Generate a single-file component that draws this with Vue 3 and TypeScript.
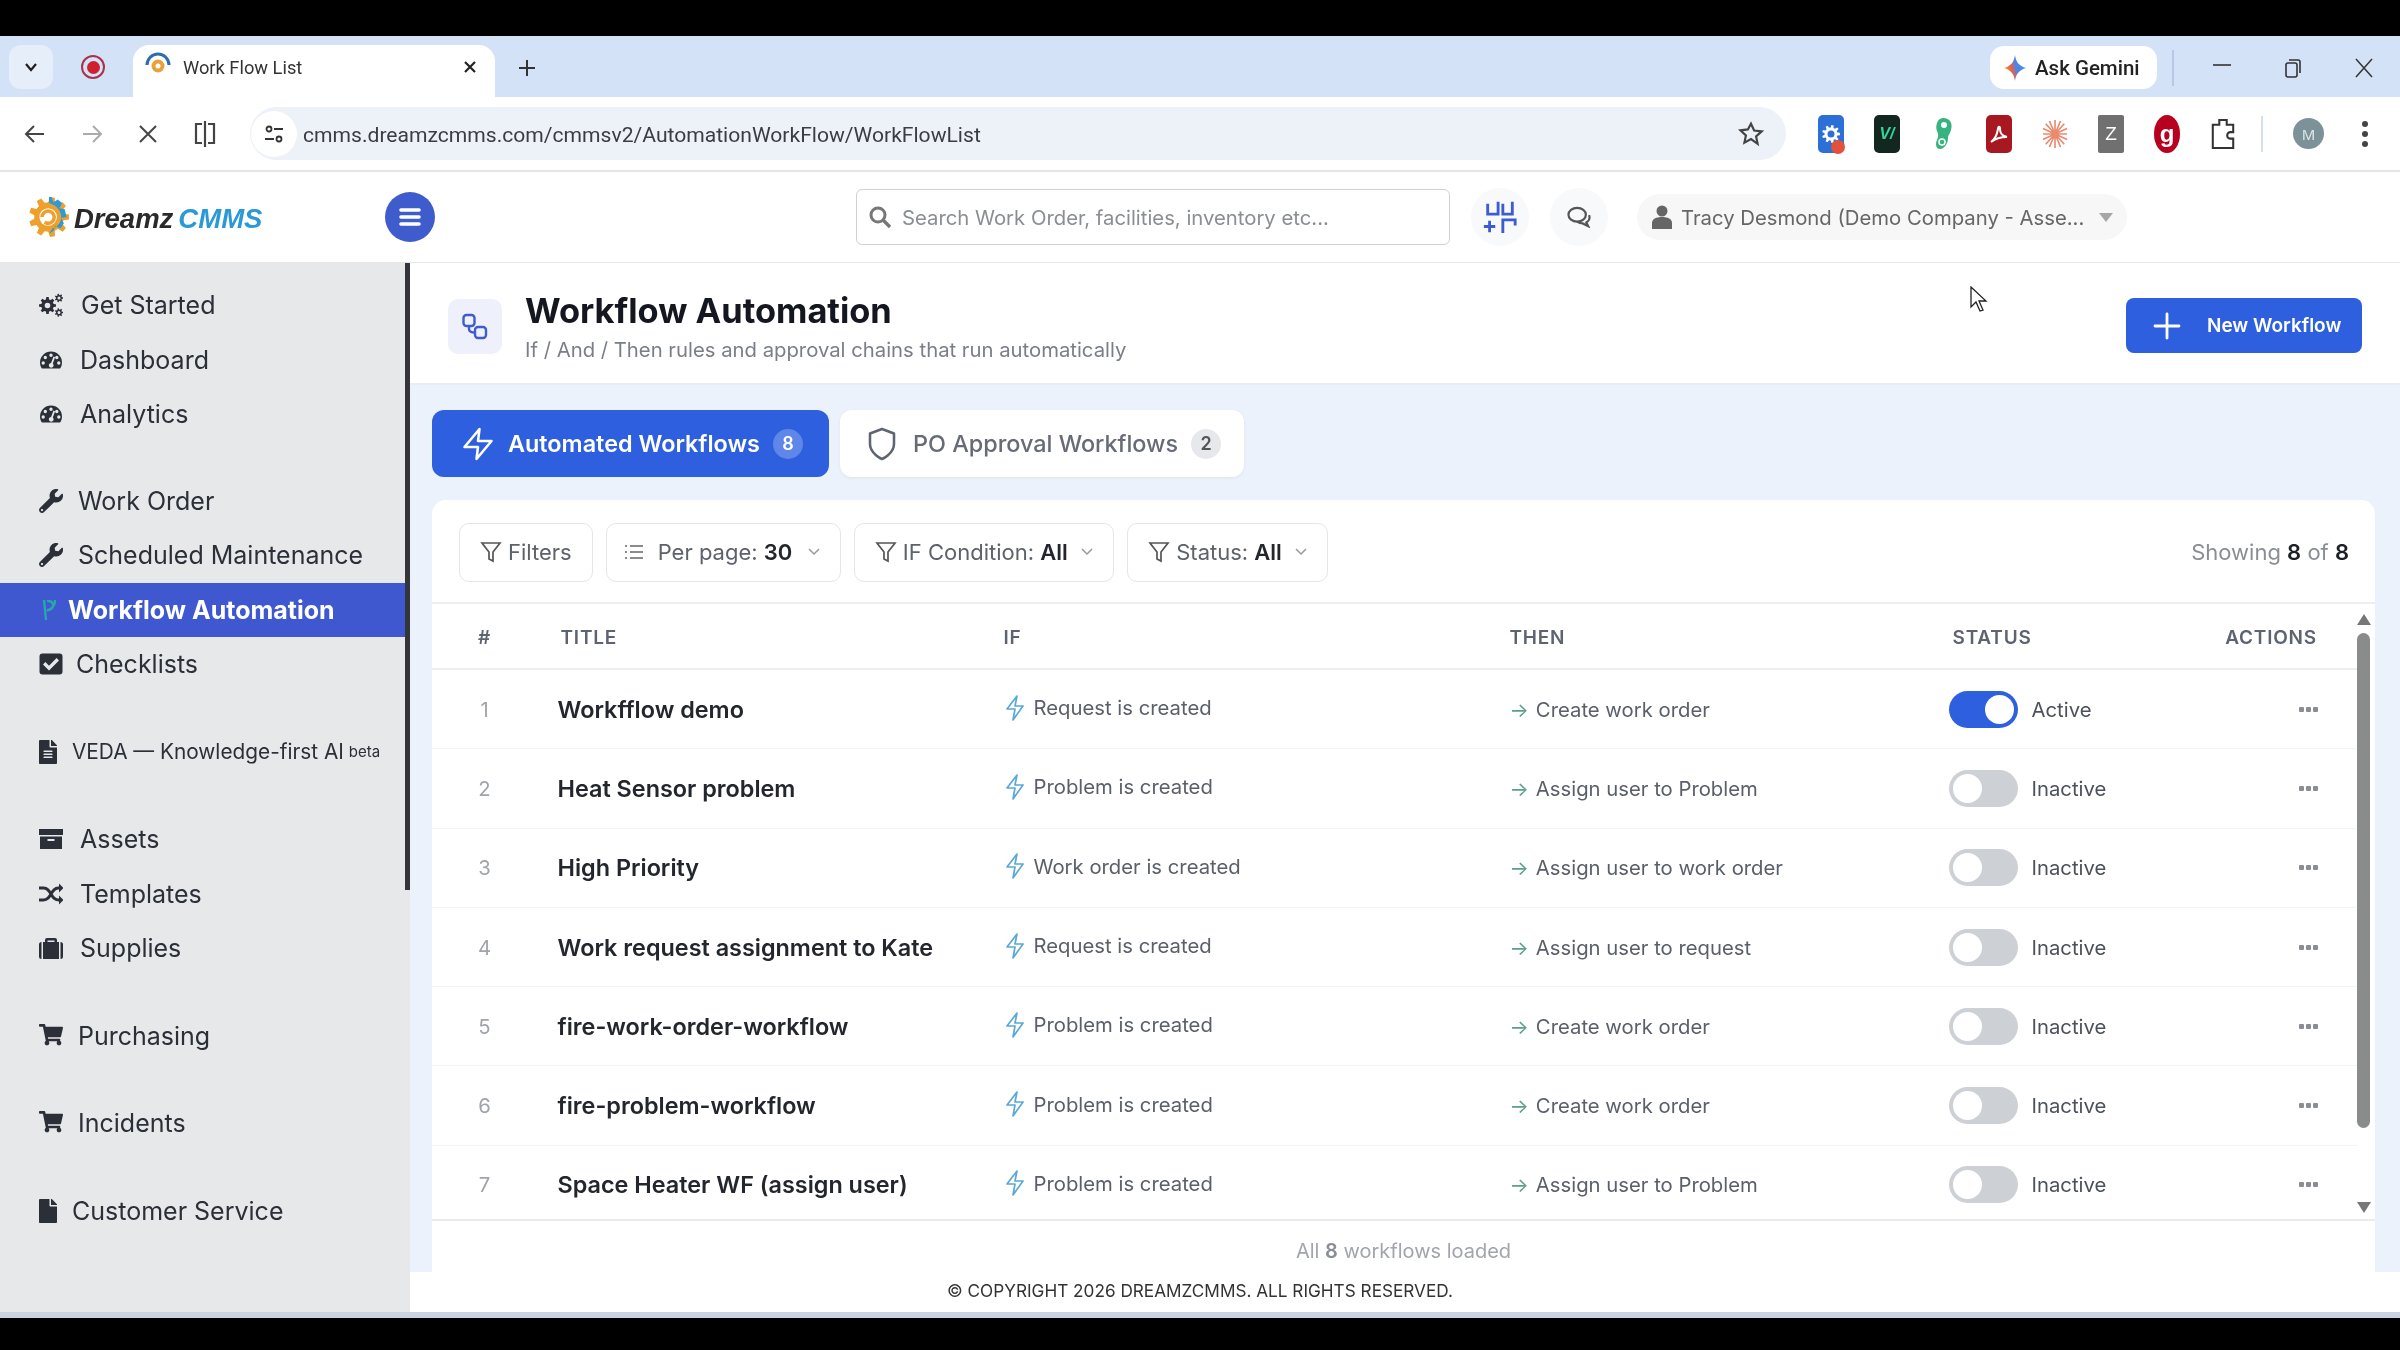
<script setup lang="ts">
interface SideItem {
  label: string;
  icon: string;
  inset: number;
  active?: boolean;
  note?: string;
  small?: boolean;
}
interface Flow {
  title: string;
  cond: string;
  action: string;
  on: boolean;
}

function gearPath(cx: number, cy: number, outer: number, inner: number, teeth: number): string {
  const pts: string[] = [];
  const step = (Math.PI * 2) / teeth;
  for (let i = 0; i < teeth; i++) {
    const a = i * step;
    const corners: [number, number][] = [
      [inner, a - step * 0.32],
      [outer, a - step * 0.18],
      [outer, a + step * 0.18],
      [inner, a + step * 0.32],
    ];
    for (const [r, t] of corners) {
      pts.push(`${(cx + r * Math.cos(t)).toFixed(2)} ${(cy + r * Math.sin(t)).toFixed(2)}`);
    }
  }
  return `M${pts.join("L")}Z`;
}

function hole(cx: number, cy: number, r: number): string {
  return `M${cx - r} ${cy}a${r} ${r} 0 1 0 ${r * 2} 0a${r} ${r} 0 1 0 ${-r * 2} 0Z`;
}

const wrench =
  "M507.73 109.1c-2.24-9.03-13.54-12.09-20.12-5.51l-74.36 74.36-67.88-11.31-11.31-67.88 74.36-74.36c6.62-6.62 3.43-17.9-5.66-20.16-47.38-11.74-99.55.91-136.58 37.93-39.64 39.64-50.55 97.1-34.05 147.2L18.74 402.76c-24.99 24.99-24.99 65.51 0 90.5 24.99 24.99 65.51 24.99 90.5 0l213.21-213.21c50.12 16.71 107.47 5.68 147.37-34.22 37.07-37.07 49.7-89.32 37.91-136.73zM64 472c-13.25 0-24-10.75-24-24 0-13.26 10.75-24 24-24s24 10.74 24 24c0 13.25-10.75 24-24 24z";
const cart =
  "M528.12 301.319l47.273-208C578.806 78.301 567.391 64 551.99 64H159.208l-9.166-44.81C147.758 8.021 137.93 0 126.529 0H24C10.745 0 0 10.745 0 24v16c0 13.255 10.745 24 24 24h69.883l70.248 343.435C147.325 417.1 136 435.222 136 456c0 30.928 25.072 56 56 56s56-25.072 56-56c0-15.674-6.447-29.835-16.824-40h209.647C430.447 426.165 424 440.326 424 456c0 30.928 25.072 56 56 56s56-25.072 56-56c0-22.172-12.888-41.332-31.579-50.405l5.517-24.276c3.413-15.018-8.002-29.319-23.403-29.319H218.117l-6.545-32h293.145c11.206 0 20.92-7.754 23.403-18.681z";
const fileAlt =
  "M224 136V0H24C10.7 0 0 10.7 0 24v464c0 13.3 10.7 24 24 24h336c13.3 0 24-10.7 24-24V160H248c-13.2 0-24-10.8-24-24zm64 236c0 6.6-5.4 12-12 12H108c-6.6 0-12-5.4-12-12v-8c0-6.6 5.4-12 12-12h168c6.6 0 12 5.4 12 12v8zm0-64c0 6.6-5.4 12-12 12H108c-6.6 0-12-5.4-12-12v-8c0-6.6 5.4-12 12-12h168c6.6 0 12 5.4 12 12v8zm0-72v8c0 6.6-5.4 12-12 12H108c-6.6 0-12-5.4-12-12v-8c0-6.6 5.4-12 12-12h168c6.6 0 12 5.4 12 12zm96-114.1v6.1H256V0h6.1c6.4 0 12.5 2.5 17 7l97.9 98c4.5 4.5 7 10.6 7 16.9z";
const file =
  "M224 136V0H24C10.7 0 0 10.7 0 24v464c0 13.3 10.7 24 24 24h336c13.3 0 24-10.7 24-24V160H248c-13.2 0-24-10.8-24-24zm160-14.1v6.1H256V0h6.1c6.4 0 12.5 2.5 17 7l97.9 98c4.5 4.5 7 10.6 7 16.9z";

const gauge =
  '<path fill-rule="evenodd" d="M12 3.5A11 11 0 0 0 1 14.5c0 2.3.7 4.400 1.900 6h18.200c1.200-1.600 1.900-3.700 1.900-6a11 11 0 0 0-11-11z' +
  hole(12, 7.2, 1.7) + hole(6.300, 9.500, 1.700) + hole(4.200, 15, 1.700) + hole(19.800, 15, 1.700) + hole(17.800, 9.500, 1.700) +
  'M14.500 8.500l1.600.7-2.300 6.300a2.400 2.400 0 1 1-1.700-.6z"/>';

const sideIcons: Record<string, string> = {
  cogs:
    `<path fill-rule="evenodd" d="${gearPath(8.5, 12.5, 8.5, 6.3, 8)}${hole(8.5, 12.5, 2.8)}"/>` +
    `<path fill-rule="evenodd" d="${gearPath(20, 5, 4.2, 3, 7)}${hole(20, 5, 1.5)}"/>` +
    `<path fill-rule="evenodd" d="${gearPath(20, 19.500, 4.2, 3, 7)}${hole(20, 19.500, 1.5)}"/>`,
  gauge,
  wrench: `<path transform="scale(.04688)" d="${wrench}"/>`,
  flow: '<path d="M5 2l2 20M8 3c8-1 8 9 0 9.500M16 2c.5 5-3 9-8 10.500" fill="none" stroke="#28a7ad" stroke-width="2.400"/>',
  check:
    '<path fill-rule="evenodd" d="M3.500 1.500h17a3 3 0 0 1 3 3v15a3 3 0 0 1-3 3h-17a3 3 0 0 1-3-3v-15a3 3 0 0 1 3-3zM10 18.500l10-10-2.400-2.400L10 13.700l-3.600-3.600L4 12.500z"/>',
  fileAlt: `<path transform="scale(.04688)" d="${fileAlt}"/>`,
  file: `<path transform="scale(.04688)" d="${file}"/>`,
  archive:
    '<path fill-rule="evenodd" d="M0 2h24v6H0zM1 9.500h22V22H1zM8.500 12v2h7v-2z"/>',
  random:
    '<path d="M0 6h4.500c4 0 5.500 2.500 7.500 6s3.500 6 7.500 6H21M0 18h4.500c4 0 5.500-2.500 7.500-6s3.500-6 7.500-6H21" fill="none" stroke="currentColor" stroke-width="2.800"/><path d="M20 1.500l4.500 4.500L20 10.500zM20 13.500l4.500 4.500-4.500 4.500z"/>',
  briefcase:
    '<path fill-rule="evenodd" d="M8 2h8a2 2 0 0 1 2 2v2h2v17H4V6h2V4a2 2 0 0 1 2-2zM8.500 4.500V6h7V4.500zM0 8.500A2.500 2.500 0 0 1 2.500 6v17A2.500 2.500 0 0 1 0 20.500zM21.500 6A2.500 2.500 0 0 1 24 8.500v12a2.500 2.500 0 0 1-2.500 2.500z"/>',
  cart: `<path transform="scale(.04167)" d="${cart}"/>`,
};

const groups: SideItem[][] = [
  [
    { label: "Get Started", icon: "cogs", inset: 42 },
    { label: "Dashboard", icon: "gauge", inset: 41 },
    { label: "Analytics", icon: "gauge", inset: 41 },
  ],
  [
    { label: "Work Order", icon: "wrench", inset: 39 },
    { label: "Scheduled Maintenance", icon: "wrench", inset: 39 },
    { label: "Workflow Automation", icon: "flow", inset: 29, active: true },
    { label: "Checklists", icon: "check", inset: 37 },
  ],
  [{ label: "VEDA — Knowledge-first AI", icon: "fileAlt", inset: 33, note: "beta", small: true }],
  [
    { label: "Assets", icon: "archive", inset: 41 },
    { label: "Templates", icon: "random", inset: 41 },
    { label: "Supplies", icon: "briefcase", inset: 41 },
  ],
  [{ label: "Purchasing", icon: "cart", inset: 39 }],
  [{ label: "Incidents", icon: "cart", inset: 39 }],
  [{ label: "Customer Service", icon: "file", inset: 33 }],
];

const flows: Flow[] = [
  { title: "Workfflow demo", cond: "Request is created", action: "Create work order", on: true },
  { title: "Heat Sensor problem", cond: "Problem is created", action: "Assign user to Problem", on: false },
  { title: "High Priority", cond: "Work order is created", action: "Assign user to work order", on: false },
  { title: "Work request assignment to Kate", cond: "Request is created", action: "Assign user to request", on: false },
  { title: "fire-work-order-workflow", cond: "Problem is created", action: "Create work order", on: false },
  { title: "fire-problem-workflow", cond: "Problem is created", action: "Create work order", on: false },
  { title: "Space Heater WF (assign user)", cond: "Problem is created", action: "Assign user to Problem", on: false },
];

const logoGear = gearPath(24, 24, 23, 17, 9);
const extGear = gearPath(11, 13, 9, 6.5, 9);
</script>

<template>
  <div class="screen">
    <div class="black top"></div>

    <div class="tabstrip">
      <div class="tab-menu">
        <svg width="16" height="16" viewBox="0 0 16 16"><path d="M3 5l5 6 5-6" fill="none" stroke="#1f1f1f" stroke-width="2.200" /></svg>
      </div>
      <div class="rec"><span></span></div>
      <div class="tab">
        <svg class="favicon" width="26" height="26" viewBox="0 0 26 26">
          <path d="M2 14a11 11 0 0 1 22 0" fill="none" stroke="#2f6db3" stroke-width="3" />
          <circle cx="13" cy="15" r="6.500" fill="#e9a23b" />
          <circle cx="13" cy="15" r="2.500" fill="#fff" />
        </svg>
        <span class="tab-title">Work Flow List</span>
        <svg class="tab-x" width="16" height="16" viewBox="0 0 16 16"><path d="M3 3l10 10M13 3L3 13" stroke="#222" stroke-width="2.200" /></svg>
      </div>
      <svg class="tab-plus" width="20" height="20" viewBox="0 0 20 20"><path d="M10 2v16M2 10h16" stroke="#333" stroke-width="2" /></svg>
      <div class="strip-right">
        <div class="gemini">
          <svg width="24" height="28" viewBox="0 0 24 28">
            <defs>
              <linearGradient id="gem" x1="0" y1="0.7" x2="1" y2="0.4">
                <stop offset="0" stop-color="#e8b12c" />
                <stop offset="0.35" stop-color="#e8604a" />
                <stop offset="0.6" stop-color="#4a86e8" />
                <stop offset="1" stop-color="#3f8cf0" />
              </linearGradient>
            </defs>
            <path d="M12 1c1 7 4 11 11 13-7 2-10 6-11 13-1-7-4-11-11-13C8 12 11 8 12 1z" fill="url(#gem)" />
          </svg>
          <span>Ask Gemini</span>
        </div>
        <i class="strip-div"></i>
        <div class="win-btns">
          <svg width="20" height="20" viewBox="0 0 20 20"><path d="M1 7h18" stroke="#333" stroke-width="1.600" /></svg>
          <svg width="20" height="20" viewBox="0 0 20 20"><rect x="3" y="5" width="11" height="14" rx="2" fill="none" stroke="#333" stroke-width="1.600" /><path d="M6 2h9a2 2 0 0 1 2 2v11" fill="none" stroke="#333" stroke-width="1.600" /></svg>
          <svg width="20" height="20" viewBox="0 0 20 20"><path d="M2 1l16 18M18 1L2 19" stroke="#333" stroke-width="1.500" /></svg>
        </div>
      </div>
    </div>

    <div class="toolbar">
      <div class="nav-btns">
        <svg width="22" height="22" viewBox="0 0 22 22"><path d="M20 11H3M10 3l-8 8 8 8" fill="none" stroke="#444" stroke-width="2" /></svg>
        <svg width="22" height="22" viewBox="0 0 22 22"><path d="M2 11h17M12 3l8 8-8 8" fill="none" stroke="#aaa" stroke-width="2" /></svg>
        <svg width="20" height="20" viewBox="0 0 20 20"><path d="M2 2l16 16M18 2L2 18" stroke="#444" stroke-width="2" /></svg>
        <svg width="24" height="26" viewBox="0 0 24 26"><path d="M9 3H3v19h6M15 3h6v19h-6M12 0v26" fill="none" stroke="#444" stroke-width="2.200" /></svg>
      </div>
      <div class="omnibox">
        <div class="tune">
          <svg width="20" height="20" viewBox="0 0 20 20"><circle cx="5" cy="5" r="2.500" fill="none" stroke="#333" stroke-width="1.800" /><path d="M10 5h9M1 15h9" stroke="#333" stroke-width="2" /><circle cx="15" cy="15" r="2.500" fill="none" stroke="#333" stroke-width="1.800" /></svg>
        </div>
        <span class="url">cmms.dreamzcmms.com/cmmsv2/AutomationWorkFlow/WorkFlowList</span>
        <svg class="star" width="26" height="26" viewBox="0 0 24 24"><path d="M12 2.500l2.900 6.300 6.900.8-5.100 4.700 1.400 6.800L12 16.700l-6.100 3.400 1.400-6.800-5.100-4.700 6.900-.8z" fill="none" stroke="#444" stroke-width="2" /></svg>
      </div>
      <div class="exts">
        <span class="ext e1">
          <svg width="22" height="26" viewBox="0 0 22 26"><path :d="extGear" fill="#fff" /><circle cx="11" cy="13" r="3.500" fill="#2c6fd6" /></svg>
          <i></i>
        </span>
        <span class="ext e2">V/</span>
        <svg class="ext-svg" width="26" height="36" viewBox="0 0 26 36"><path d="M13 2c7 0 10 5 8 12-1 4-3 5-3 8 0 6-4 11-8 11s-5-5-3-9c1-3 2-5 0-9S7 2 13 2z" fill="#36b37e" /><circle cx="14" cy="9" r="3" fill="#fff" /><circle cx="12" cy="26" r="3" fill="none" stroke="#fff" stroke-width="1.500" /></svg>
        <span class="ext e4">
          <svg width="22" height="22" viewBox="0 0 22 22"><path d="M3 19c3-2 6-7 7-13 .3-3 2-3 2 0 0 4 2 7 7 8-5 0-11 1-16 5z" fill="none" stroke="#fff" stroke-width="2" /></svg>
        </span>
        <svg class="ext-svg" width="28" height="32" viewBox="0 0 28 32"><path d="M14 1v30M1 16h26M4 5l20 22M24 5L4 27M8 2l12 28M20 2L8 30M1 10l26 12M27 10L1 22" stroke="#e98a6f" stroke-width="1.800" /></svg>
        <span class="ext e6">Z</span>
        <span class="ext e7">g</span>
        <svg class="ext-svg" width="28" height="36" viewBox="0 0 28 36"><path d="M3 8h7V3h8v5h7v8h-3a3 3 0 0 0 0 7h3v10H3z" fill="none" stroke="#333" stroke-width="2.200" /></svg>
        <i class="bar-div"></i>
        <span class="avatar">M</span>
        <svg width="8" height="30" viewBox="0 0 8 30"><circle cx="4" cy="5" r="3" fill="#444" /><circle cx="4" cy="15" r="3" fill="#444" /><circle cx="4" cy="25" r="3" fill="#444" /></svg>
      </div>
    </div>

    <header class="appbar">
      <div class="logo">
        <svg width="42" height="46" viewBox="0 0 48 48">
          <path :d="logoGear" fill="#eea02c" />
          <path d="M24 1h3l2 6 5-3 5 4-3 6 6 1 2 9-6 1 3 6-4 6-6-3-2 6-5 3 4-6c6-2 10-7 10-13S34 11 24 8z" fill="#2d9ad8" />
          <circle cx="23" cy="24" r="10" fill="#fff" />
          <path d="M16 24a7 7 0 1 1 3 6" fill="none" stroke="#eea02c" stroke-width="4" />
        </svg>
        <span class="logo-dark">Dreamz</span>
        <span class="logo-blue">CMMS</span>
      </div>
      <button class="menu-btn">
        <svg width="24" height="20" viewBox="0 0 24 20"><path d="M3 3h18M3 10h18M3 17h18" stroke="#fff" stroke-width="3.600" stroke-linecap="round" /></svg>
      </button>
      <div class="search">
        <svg width="24" height="24" viewBox="0 0 24 24"><circle cx="10" cy="10" r="7" fill="none" stroke="#777" stroke-width="3" /><path d="M15 15l7 7" stroke="#777" stroke-width="3.400" /></svg>
        <span>Search Work Order, facilities, inventory etc...</span>
      </div>
      <div class="round-btn scan">
        <svg width="36" height="36" viewBox="0 0 38 38">
          <path d="M6 5v11h11V3M32 3v13H22V5" fill="none" stroke="#3f5ccd" stroke-width="3" />
          <path d="M2 29h12M8 23v12M22 36V22h13v6" fill="none" stroke="#3f5ccd" stroke-width="3" />
        </svg>
      </div>
      <div class="round-btn chat">
        <svg width="24" height="22" viewBox="0 0 26 24">
          <ellipse cx="11" cy="9.500" rx="9.500" ry="7.500" fill="none" stroke="#555" stroke-width="2.400" />
          <path d="M24 10c1.500 4-1 7-3 8l2 4-6-3c-2 0-4-.5-6-2" fill="none" stroke="#555" stroke-width="2.400" />
        </svg>
      </div>
      <div class="user">
        <svg width="20" height="24" viewBox="0 0 20 24"><circle cx="10" cy="6" r="5.500" fill="#666" /><path d="M0 24v-6c0-4 4-6 10-6s10 2 10 6v6z" fill="#666" /></svg>
        <span>Tracy Desmond (Demo Company - Asse...</span>
        <svg class="user-caret" width="14" height="9" viewBox="0 0 14 9"><path d="M0 0h14L7 9z" fill="#a6a6a6" /></svg>
      </div>
    </header>

    <div class="body">
      <aside class="sidebar">
        <nav class="side-nav">
          <ul v-for="(group, g) in groups" :key="g" class="side-group">
            <li v-for="item in group" :key="item.label" class="side-item" :class="{ active: item.active, small: item.small }">
              <span class="side-icon" :style="{ width: item.inset + 'px' }">
                <svg width="24" height="24" viewBox="0 0 24 24" fill="currentColor" v-html="sideIcons[item.icon]"></svg>
              </span>
              <span>{{ item.label }}</span>
              <small v-if="item.note">{{ item.note }}</small>
            </li>
          </ul>
        </nav>
        <div class="side-rail"><i></i></div>
      </aside>

      <main class="main">
        <section class="page-head">
          <div class="head-icon">
            <svg width="28" height="28" viewBox="0 0 28 28">
              <rect x="2.500" y="3" width="11" height="11" rx="3" fill="none" stroke="#3f5ccd" stroke-width="2.400" />
              <rect x="14" y="15" width="11" height="11" rx="3" fill="none" stroke="#3f5ccd" stroke-width="2.400" />
              <path d="M8 14v3c0 2 1.500 3.500 6 3.500" fill="none" stroke="#3f5ccd" stroke-width="2.400" />
            </svg>
          </div>
          <div class="head-text">
            <h1>Workflow Automation</h1>
            <p>If / And / Then rules and approval chains that run automatically</p>
          </div>
          <button class="new-btn">
            <svg width="28" height="28" viewBox="0 0 28 28"><path d="M14 2v24M2 14h24" stroke="#fff" stroke-width="2.800" stroke-linecap="round" /></svg>
            <span>New Workflow</span>
          </button>
          <svg class="cursor" width="18" height="26" viewBox="0 0 18 26"><path d="M1 1v20l5-5 4 9 3-1-4-9h7z" fill="#fff" stroke="#222" stroke-width="1.300" /></svg>
        </section>

        <section class="content">
          <div class="wf-tabs">
            <button class="wf-tab on">
              <svg width="36" height="36" viewBox="0 0 24 24"><path d="M13 2 3 14h9l-1 8 10-12h-9z" fill="none" stroke="#fff" stroke-width="1.700" stroke-linejoin="round" /></svg>
              <span>Automated Workflows</span>
              <b class="count">8</b>
            </button>
            <button class="wf-tab off">
              <svg width="36" height="36" viewBox="0 0 24 24"><path d="M12 22s8-3.500 8-10V5l-8-3-8 3v7c0 6.500 8 10 8 10z" fill="none" stroke="#5f6570" stroke-width="1.700" stroke-linejoin="round" /></svg>
              <span>PO Approval Workflows</span>
              <b class="count">2</b>
            </button>
          </div>

          <div class="card">
            <div class="filters">
              <button class="chip">
                <svg class="funnel" width="22" height="24" viewBox="0 0 22 24"><path d="M2 3h18l-7 9v9l-4-2v-7z" fill="none" stroke="#555" stroke-width="1.700" /></svg>
                <span>Filters</span>
              </button>
              <button class="chip pp">
                <svg width="18" height="16" viewBox="0 0 18 16"><path d="M5 2h13M5 8h13M5 14h13M0 2h2M0 8h2M0 14h2" stroke="#666" stroke-width="1.500" /></svg>
                <span>Per page: <b>30</b></span>
                <svg class="chev" width="12" height="8" viewBox="0 0 12 8"><path d="M1 1l5 5 5-5" fill="none" stroke="#999" stroke-width="1.500" /></svg>
              </button>
              <button class="chip">
                <svg class="funnel" width="22" height="24" viewBox="0 0 22 24"><path d="M2 3h18l-7 9v9l-4-2v-7z" fill="none" stroke="#555" stroke-width="1.700" /></svg>
                <span>IF Condition: <b>All</b></span>
                <svg class="chev" width="12" height="8" viewBox="0 0 12 8"><path d="M1 1l5 5 5-5" fill="none" stroke="#999" stroke-width="1.500" /></svg>
              </button>
              <button class="chip">
                <svg class="funnel" width="22" height="24" viewBox="0 0 22 24"><path d="M2 3h18l-7 9v9l-4-2v-7z" fill="none" stroke="#555" stroke-width="1.700" /></svg>
                <span>Status: <b>All</b></span>
                <svg class="chev" width="12" height="8" viewBox="0 0 12 8"><path d="M1 1l5 5 5-5" fill="none" stroke="#999" stroke-width="1.500" /></svg>
              </button>
              <div class="showing">Showing <b>8</b> of <b>8</b></div>
            </div>

            <div class="table-wrap">
              <div class="table">
                <div class="row head">
                  <span class="c-num">#</span>
                  <span class="c-title">TITLE</span>
                  <span>IF</span>
                  <span>THEN</span>
                  <span>STATUS</span>
                  <span class="c-act">ACTIONS</span>
                </div>
                <div v-for="(f, i) in flows" :key="f.title" class="row">
                  <span class="c-num">{{ i + 1 }}</span>
                  <span class="flow-name">{{ f.title }}</span>
                  <span class="cond">
                    <svg width="22" height="26" viewBox="0 0 22 26"><path d="M13 1 3 14h8l-2 11 10-14h-8z" fill="none" stroke="#5aa8d8" stroke-width="1.700" stroke-linejoin="round" /></svg>
                    {{ f.cond }}
                  </span>
                  <span class="then"><em>→</em>{{ f.action }}</span>
                  <span class="status">
                    <i class="toggle" :class="{ on: f.on }"></i>
                    {{ f.on ? "Active" : "Inactive" }}
                  </span>
                  <span class="c-act dots"><i></i><i></i><i></i></span>
                </div>
              </div>
              <div class="scrollbar">
                <i class="up"></i>
                <div class="track"><i></i></div>
                <i class="down"></i>
              </div>
            </div>

            <div class="loaded">All <b>8</b> workflows loaded</div>
          </div>
        </section>

        <footer class="copyright">© COPYRIGHT 2026 DREAMZCMMS. ALL RIGHTS RESERVED.</footer>
      </main>
    </div>

    <div class="edge"></div>
    <div class="black bottom"></div>
  </div>
</template>

<style>
html,
body {
  margin: 0;
  background: #000;
}
</style>

<style scoped>
.screen {
  width: 2400px;
  height: 1350px;
  display: flex;
  flex-direction: column;
  overflow: hidden;
  font-family: Inter, "Noto Sans", sans-serif;
  color: #2b2f38;
  background: #fff;
  filter: blur(0.4px);
}
button {
  font-family: inherit;
  border: none;
  cursor: pointer;
}
.black {
  background: #000;
  flex: none;
}
.top {
  height: 36px;
}
.bottom {
  height: 32px;
}
.edge {
  height: 6px;
  flex: none;
  background: #c9d3e2;
}

/* browser chrome */
.tabstrip {
  height: 61px;
  flex: none;
  background: #d3e2f6;
  display: flex;
  align-items: flex-end;
  padding-left: 9px;
}
.tab-menu {
  width: 44px;
  height: 44px;
  margin-bottom: 8px;
  border-radius: 12px;
  background: #e6eefa;
  display: flex;
  align-items: center;
  justify-content: center;
}
.rec {
  width: 24px;
  height: 24px;
  margin: 0 28px 18px 28px;
  border-radius: 50%;
  border: 2.500px solid #a8324a;
  box-sizing: border-box;
  display: flex;
  align-items: center;
  justify-content: center;
}
.rec span {
  width: 13px;
  height: 13px;
  border-radius: 50%;
  background: #cf2030;
}
.tab {
  width: 362px;
  height: 52px;
  box-sizing: border-box;
  padding: 0 17px 8px 12px;
  background: #fff;
  border-radius: 16px 16px 0 0;
  display: flex;
  align-items: center;
}
.favicon {
  margin-right: 12px;
  margin-top: -6px;
}
.tab-title {
  font: 18.300px Roboto, sans-serif;
  color: #333;
}
.tab-x {
  margin-left: auto;
}
.tab-plus {
  margin: 0 0 19px 22px;
}
.strip-right {
  margin-left: auto;
  display: flex;
  align-items: center;
  align-self: center;
  margin-top: 2px;
}
.gemini {
  width: 167px;
  height: 43px;
  box-sizing: border-box;
  padding-left: 13px;
  gap: 8px;
  border-radius: 14px;
  background: #fff;
  display: flex;
  align-items: center;
  font: 500 20.500px Roboto, sans-serif;
  color: #222;
}
.strip-div {
  width: 2px;
  height: 36px;
  margin-left: 15px;
  background: #b6c8e4;
}
.win-btns {
  display: flex;
  align-items: center;
  gap: 51px;
  margin-left: 38px;
  margin-right: 26px;
}
.toolbar {
  height: 75px;
  flex: none;
  box-sizing: border-box;
  background: #fff;
  border-bottom: 2px solid #e3e6eb;
  display: flex;
  align-items: center;
  padding-left: 24px;
}
.nav-btns {
  display: flex;
  align-items: center;
  gap: 35px;
  width: 226px;
  flex: none;
}
.omnibox {
  width: 1536px;
  height: 53px;
  flex: none;
  box-sizing: border-box;
  background: #edf1f8;
  border-radius: 27px;
  display: flex;
  align-items: center;
}
.tune {
  width: 46px;
  height: 46px;
  margin-left: 1px;
  flex: none;
  border-radius: 50%;
  background: #fff;
  display: flex;
  align-items: center;
  justify-content: center;
}
.url {
  margin-left: 6px;
  padding-top: 2px;
  font: 21.100px Roboto, sans-serif;
  color: #3a3d42;
}
.star {
  margin-left: auto;
  margin-right: 22px;
}
.exts {
  display: flex;
  align-items: center;
  margin-left: 32px;
}
.ext,
.ext-svg {
  width: 26px;
  margin-right: 30px;
  flex: none;
}
.ext-svg {
  height: 36px;
}
.ext {
  height: 38px;
  border-radius: 5px;
  display: flex;
  align-items: center;
  justify-content: center;
  color: #fff;
  font: italic 700 16px "Liberation Sans", sans-serif;
  position: relative;
}
.e1 {
  background: #2c6fd6;
}
.e1 i {
  position: absolute;
  right: -1px;
  bottom: -1px;
  width: 14px;
  height: 14px;
  border-radius: 50%;
  background: #e2513c;
}
.e2 {
  background: #13261f;
  color: #34d399;
}
.e4 {
  background: #a81820;
}
.e6 {
  background: #707070;
  border-radius: 2px;
  font: 500 19px "Liberation Sans", sans-serif;
}
.e7 {
  background: #b8001f;
  border-radius: 50%;
  font: 700 24px "Liberation Sans", sans-serif;
}
.bar-div {
  width: 2px;
  height: 36px;
  margin: 0 30px 0 -5px;
  background: #d5dfee;
}
.avatar {
  width: 31px;
  height: 31px;
  border-radius: 50%;
  background: #7d9198;
  color: #dfe7ea;
  font: 15px "Noto Sans", sans-serif;
  display: flex;
  align-items: center;
  justify-content: center;
  margin-right: 37px;
}

/* app header */
.appbar {
  height: 91px;
  flex: none;
  box-sizing: border-box;
  background: #fff;
  border-bottom: 1px solid #e5e7ea;
  display: flex;
  align-items: center;
}
.logo {
  width: 385px;
  flex: none;
  box-sizing: border-box;
  padding-left: 28px;
  display: flex;
  align-items: center;
}
.logo-dark,
.logo-blue {
  margin-top: 3px;
  font: italic 700 27.500px "Liberation Sans", sans-serif;
}
.logo-dark {
  color: #2a2a2a;
  margin-left: 4px;
}
.logo-blue {
  color: #2a9ad6;
  margin-left: 5px;
}
.menu-btn {
  width: 50px;
  height: 50px;
  flex: none;
  padding: 0;
  border-radius: 50%;
  background: #3f5ccd;
  display: flex;
  align-items: center;
  justify-content: center;
}
.search {
  width: 594px;
  height: 56px;
  flex: none;
  box-sizing: border-box;
  margin-left: 421px;
  padding-left: 11px;
  border: 1.500px solid #cfd1d4;
  border-radius: 6px;
  display: flex;
  align-items: center;
  gap: 10px;
  font-size: 20.300px;
  color: #8a8d92;
}
.round-btn {
  width: 58px;
  height: 58px;
  flex: none;
  border-radius: 50%;
  background: #f8f9fb;
  display: flex;
  align-items: center;
  justify-content: center;
}
.scan {
  margin-left: 21px;
}
.chat {
  margin-left: 21px;
}
.user {
  width: 490px;
  height: 46px;
  flex: none;
  box-sizing: border-box;
  margin-left: 29px;
  padding-left: 15px;
  border-radius: 23px;
  background: #f7f7f7;
  display: flex;
  align-items: center;
  gap: 9px;
  font-size: 20.300px;
  white-space: nowrap;
  color: #666;
}
.user-caret {
  margin-left: 6px;
}

/* sidebar */
.body {
  flex: 1;
  min-height: 0;
  display: flex;
}
.sidebar {
  width: 410px;
  flex: none;
  display: flex;
  background: #e7e8ea;
}
.side-nav {
  flex: 1;
  padding-top: 15px;
}
.side-group {
  list-style: none;
  margin: 0 0 33px;
  padding: 0;
}
.side-group:first-child {
  margin-bottom: 32px;
}
.side-group:nth-child(3) {
  margin-top: 5.500px;
}
.side-item {
  height: 54.500px;
  box-sizing: border-box;
  padding-left: 39px;
  display: flex;
  align-items: center;
  font-size: 25px;
  color: #2b2f38;
}
.side-item.small {
  font-size: 20.800px;
}
.side-item small {
  margin-left: 5px;
  font-size: 15px;
}
.side-item.active {
  background: #3f57cf;
  color: #fff;
  font-weight: 700;
}
.side-icon {
  flex: none;
  display: flex;
  align-items: center;
}
.side-rail {
  width: 5px;
  flex: none;
}
.side-rail i {
  display: block;
  height: 627px;
  background: #33353a;
}

/* main */
.main {
  flex: 1;
  min-width: 0;
  display: flex;
  flex-direction: column;
}
.page-head {
  height: 122px;
  flex: none;
  box-sizing: border-box;
  padding: 0 38px;
  background: #fff;
  border-bottom: 2px solid #e9ecf0;
  display: flex;
  align-items: center;
  position: relative;
}
.head-icon {
  width: 54px;
  height: 55px;
  flex: none;
  border-radius: 10px;
  background: #eef1fb;
  display: flex;
  align-items: center;
  justify-content: center;
  margin-top: 6px;
}
.head-text {
  margin-left: 23px;
  margin-top: 4px;
}
.head-text h1 {
  margin: 0;
  font-size: 34.400px;
  line-height: 44px;
  font-weight: 700;
  color: #14171f;
}
.head-text p {
  margin: 4px 0 0;
  font-size: 20.300px;
  color: #7a7e86;
}
.new-btn {
  margin-left: auto;
  margin-top: 5px;
  width: 236px;
  height: 55px;
  border-radius: 8px;
  background: #2d5fdf;
  color: #fff;
  display: flex;
  align-items: center;
  gap: 26px;
  padding: 0 0 0 27px;
  box-sizing: border-box;
  font-size: 19px;
  font-weight: 600;
}
.cursor {
  position: absolute;
  left: 1560px;
  top: 23px;
}
.content {
  flex: 1;
  min-height: 0;
  box-sizing: border-box;
  padding: 25px 25px 0 22px;
  background: #ecf2fb;
  display: flex;
  flex-direction: column;
  gap: 23px;
}
.wf-tabs {
  display: flex;
  gap: 11px;
  height: 67px;
  flex: none;
}
.wf-tab {
  height: 100%;
  box-sizing: border-box;
  border-radius: 12px;
  padding: 0;
  display: flex;
  align-items: center;
  font-size: 23.400px;
  font-weight: 600;
}
.wf-tab.on {
  width: 397px;
  padding-left: 28px;
  background: #2d5fdf;
  color: #fff;
}
.wf-tab.off {
  width: 404px;
  padding-left: 24px;
  background: #fff;
  color: #666b75;
  font-weight: 500;
  box-shadow: 0 1px 3px #dde3ee;
}
.wf-tab span {
  margin: 0 13px 0 12px;
}
.wf-tab.off span {
  margin-left: 13px;
}
.count {
  width: 30px;
  height: 30px;
  border-radius: 50%;
  display: flex;
  align-items: center;
  justify-content: center;
  font-size: 18px;
  font-weight: 600;
}
.on .count {
  background: #5f87e9;
}
.off .count {
  background: #e6e8ec;
  color: #555;
}
.card {
  flex: 1;
  min-height: 0;
  background: #fff;
  border-radius: 14px 14px 0 0;
  display: flex;
  flex-direction: column;
}
.filters {
  height: 104px;
  flex: none;
  box-sizing: border-box;
  padding: 2px 26px 0 27px;
  border-bottom: 2px solid #eceef1;
  display: flex;
  align-items: center;
  gap: 13px;
}
.chip {
  height: 59px;
  box-sizing: border-box;
  padding: 0 20px;
  background: #fff;
  border: 1.500px solid #e4e6ea;
  border-radius: 10px;
  display: flex;
  align-items: center;
  gap: 6px;
  font-size: 22px;
  color: #5e626b;
}
.chip b {
  color: #23262d;
  font-weight: 600;
}
.chip.pp {
  gap: 0;
  padding-left: 18px;
}
.chip.pp > span {
  margin: 0 8px 0 15px;
}
.chev {
  margin-left: 7.500px;
}
.showing {
  margin-left: auto;
  font-size: 22px;
  color: #8a8e95;
}
.showing b {
  color: #1d2027;
  font-weight: 600;
}
.table-wrap {
  height: 617px;
  flex: none;
  border-bottom: 2px solid #e9ebee;
  box-sizing: border-box;
  display: flex;
}
.table {
  flex: 1;
  min-width: 0;
  overflow: hidden;
}
.row {
  height: 79.300px;
  box-sizing: border-box;
  border-bottom: 1px solid #f3f4f6;
  display: grid;
  grid-template-columns: 125.500px 446px 506px 443px 1fr auto;
  align-items: center;
  font-size: 20.300px;
  color: #5a5f6a;
}
.row.head {
  height: 66px;
  padding-top: 2px;
  border-bottom: 2px solid #eceef1;
  font-size: 19px;
  font-weight: 600;
  letter-spacing: 0.8px;
  color: #5d6470;
}
.c-num {
  width: 105px;
  text-align: center;
  color: #a0a4aa;
}
.head .c-num {
  color: #5d6470;
}
.head .c-title {
  padding-left: 3px;
}
.c-act {
  margin-right: 40px;
}
.flow-name {
  font-size: 23.400px;
  font-weight: 600;
  color: #23262d;
}
.cond {
  display: flex;
  align-items: center;
  gap: 8px;
  margin-top: -3px;
}
.then em {
  font-style: normal;
  color: #5aa08a;
  margin-right: 7px;
}
.status {
  display: flex;
  align-items: center;
  gap: 13.500px;
  margin-left: -3.500px;
  color: #4c515b;
}
.toggle {
  width: 69px;
  height: 37px;
  flex: none;
  box-sizing: border-box;
  padding: 4px;
  border-radius: 19px;
  background: #cdd1d6;
  display: flex;
}
.toggle::after {
  content: "";
  width: 29px;
  height: 29px;
  border-radius: 50%;
  background: #fff;
}
.toggle.on {
  background: #2d5fdf;
  justify-content: flex-end;
}
.dots {
  display: flex;
  gap: 2px;
  margin-right: 39px;
}
.dots i {
  width: 5px;
  height: 5px;
  background: #8a8d92;
  border-radius: 1px;
}
.scrollbar {
  width: 13px;
  margin-right: 5px;
  flex: none;
  display: flex;
  flex-direction: column;
  align-items: center;
  padding: 10px 0 6px;
  box-sizing: border-box;
}
.track {
  flex: 1;
  width: 100%;
  margin: 8px 0;
}
.track i {
  display: block;
  height: 495px;
  border-radius: 7px;
  background: #8a8b8b;
}
.up,
.down {
  width: 0;
  height: 0;
  border-left: 7px solid transparent;
  border-right: 7px solid transparent;
}
.up {
  border-bottom: 11px solid #777;
}
.down {
  border-top: 11px solid #777;
}
.loaded {
  flex: 1;
  text-align: center;
  padding-top: 18px;
  font-size: 20px;
  color: #a2a5ab;
}
.loaded b {
  font-weight: 600;
  color: #8a8d93;
}
.copyright {
  height: 40px;
  flex: none;
  box-sizing: border-box;
  padding-left: 537px;
  background: #fff;
  font-size: 17.200px;
  line-height: 38px;
  color: #333;
}
</style>
